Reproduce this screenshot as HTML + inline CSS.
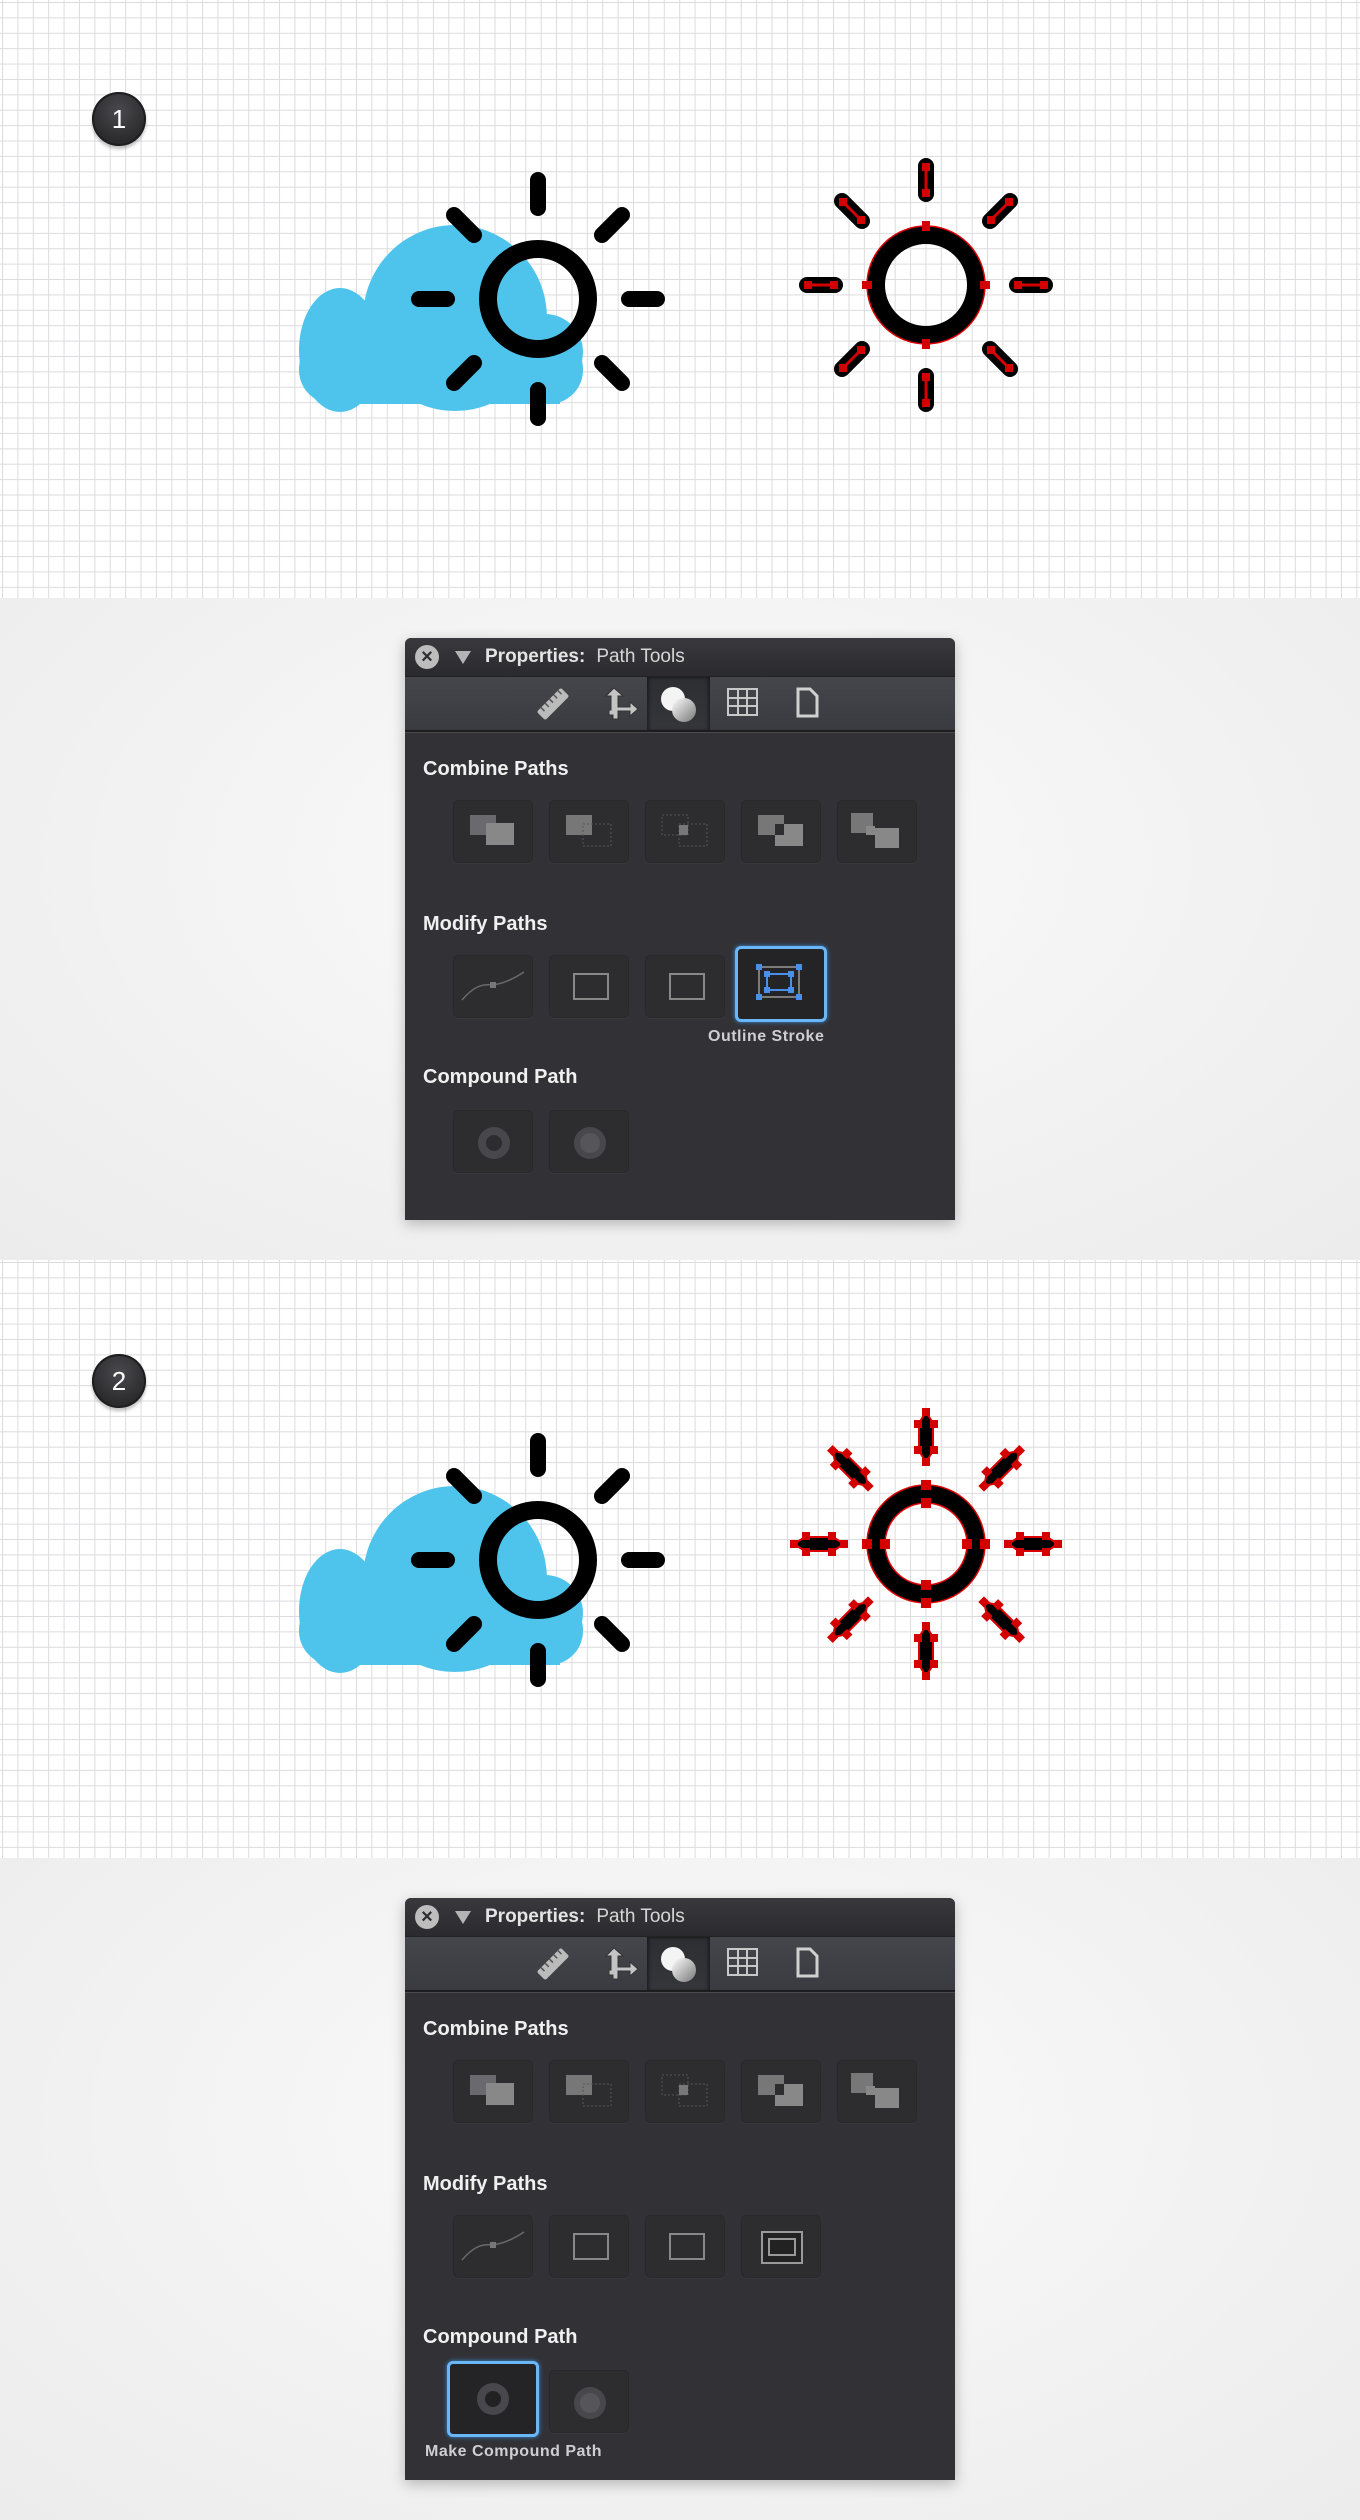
<!DOCTYPE html>
<html><head><meta charset="utf-8">
<style>
*{margin:0;padding:0;box-sizing:border-box}
body{width:1360px;height:2520px;position:relative;overflow:hidden;background:#f1f1f1;font-family:"Liberation Sans",Arial,sans-serif}
.grid{position:absolute;left:0;width:1360px;height:598px;background-color:#fff;
background-image:linear-gradient(#dcdcdf 1px,transparent 1px),linear-gradient(90deg,#dcdcdf 1px,transparent 1px);
background-size:15.4px 15.4px;background-position:2px 2px}
.band{position:absolute;left:0;width:1360px;height:662px;background:radial-gradient(ellipse at 50% 40%,#fbfbfb 0%,#f0f0f0 70%,#ececec 100%)}
.badge{position:absolute;width:54px;height:54px;border-radius:50%;background:radial-gradient(circle at 50% 35%,#4a4a4e,#2a2a2d 70%);box-shadow:0 3px 3px rgba(0,0,0,.25),inset 0 0 0 2px #1e1e20;color:#fff;font-size:26px;text-align:center;line-height:54px;font-family:"Liberation Sans",sans-serif}
.panel{position:absolute;left:405px;width:550px;height:582px;background:#323236;border-radius:6px 6px 0 0;box-shadow:0 4px 14px rgba(0,0,0,.25);overflow:hidden}
.tb{position:absolute;left:0;top:0;width:550px;height:38px;background:linear-gradient(#39393d,#2b2b2f);}
.close{position:absolute;left:10px;top:7px;width:24px;height:24px;border-radius:50%;background:#bdbdbd;color:#2c2c2f;font-size:20px;font-weight:bold;text-align:center;line-height:24px}
.tri{position:absolute;left:50px;top:13px;width:0;height:0;border-left:8px solid transparent;border-right:8px solid transparent;border-top:13px solid #b4b4b4}
.ttl{position:absolute;left:80px;top:8px;font-size:19px;color:#d6d6d6;white-space:nowrap}
.ttl b{color:#e4e4e4;margin-right:11px}
.tools{position:absolute;left:0;top:38px;width:550px;height:54px;background:linear-gradient(#45464b,#3a3b40);border-top:1px solid #222}
.tools .sel{position:absolute;left:242px;top:0;width:63px;height:54px;background:linear-gradient(#2d2e32,#35363a);box-shadow:inset 2px 0 3px rgba(0,0,0,.4),inset -2px 0 3px rgba(0,0,0,.4)}
.line{position:absolute;left:0;top:92px;width:550px;height:3px;background:#1d1d1f;border-bottom:1px solid #4a4a4e}
.h{position:absolute;left:18px;font-size:20px;font-weight:bold;color:#f0f0f0;white-space:nowrap}
.btn{position:absolute;width:80px;height:63px;border-radius:5px;background:#2d2d30;border:1px solid #29292b;box-shadow:0 1px 0 rgba(255,255,255,.03)}
.btn svg{position:absolute;left:0;top:0}
.selb{position:absolute;width:92px;height:76px;border-radius:6px;border:3px solid #6ab6f7;box-shadow:0 0 4px #3b8fe0;background:#242427}
.selb svg{position:absolute;left:3px;top:3px}
.lbl{position:absolute;font-size:16px;font-weight:bold;color:#cfcfd2;white-space:nowrap;letter-spacing:.5px}
</style></head><body>

<div class="grid" style="top:0"></div>
<div class="band" style="top:598px"></div>
<div class="grid" style="top:1260px"></div>
<div class="band" style="top:1858px"></div>

<div class="badge" style="left:92px;top:92px">1</div>
<div class="badge" style="left:92px;top:1354px">2</div>

<svg width="1360" height="2520" style="position:absolute;left:0;top:0">
<defs>
<g id="cloud" fill="#4ec4ed">
<ellipse cx="455" cy="318" rx="92" ry="93"/>
<ellipse cx="340" cy="350" rx="41" ry="62"/>
<circle cx="545" cy="352" r="38"/>
<rect x="299" y="335" width="284" height="69" rx="34"/>
<rect x="340" y="330" width="220" height="74"/>
</g>
<g id="sun" stroke="#000" stroke-linecap="round" fill="none">
<circle r="50" stroke-width="18"/>
<g stroke-width="16">
<line x1="0" y1="-91" x2="0" y2="-119"/>
<line x1="0" y1="91" x2="0" y2="119"/>
<line x1="-91" y1="0" x2="-119" y2="0"/>
<line x1="91" y1="0" x2="119" y2="0"/>
<line x1="-64" y1="-64" x2="-84" y2="-84"/>
<line x1="64" y1="-64" x2="84" y2="-84"/>
<line x1="-64" y1="64" x2="-84" y2="84"/>
<line x1="64" y1="64" x2="84" y2="84"/>
</g></g>
</defs>

<!-- section 1 -->
<use href="#cloud"/>
<use href="#sun" x="538" y="299"/>
<g transform="translate(926,285)">
<use href="#sun"/>
<circle r="59" fill="none" stroke="#d00" stroke-width="1.5"/>
<g fill="#d40000">
<rect x="-4" y="-64" width="8" height="10"/><rect x="-4" y="54" width="8" height="10"/>
<rect x="-64" y="-4" width="10" height="8"/><rect x="54" y="-4" width="10" height="8"/>
</g>
<g stroke="#d40000" stroke-width="3" fill="#d40000">
<line x1="0" y1="-92" x2="0" y2="-118"/><line x1="0" y1="92" x2="0" y2="118"/>
<line x1="-92" y1="0" x2="-118" y2="0"/><line x1="92" y1="0" x2="118" y2="0"/>
<line x1="-65" y1="-65" x2="-83" y2="-83"/><line x1="65" y1="-65" x2="83" y2="-83"/>
<line x1="-65" y1="65" x2="-83" y2="83"/><line x1="65" y1="65" x2="83" y2="83"/>
</g>
<g fill="#d40000">
<rect x="-4" y="-96" width="8" height="8"/><rect x="-4" y="-122" width="8" height="8"/>
<rect x="-4" y="88" width="8" height="8"/><rect x="-4" y="114" width="8" height="8"/>
<rect x="-96" y="-4" width="8" height="8"/><rect x="-122" y="-4" width="8" height="8"/>
<rect x="88" y="-4" width="8" height="8"/><rect x="114" y="-4" width="8" height="8"/>
<rect x="-69" y="-69" width="8" height="8"/><rect x="-87" y="-87" width="8" height="8"/>
<rect x="61" y="-69" width="8" height="8"/><rect x="79" y="-87" width="8" height="8"/>
<rect x="-69" y="61" width="8" height="8"/><rect x="-87" y="79" width="8" height="8"/>
<rect x="61" y="61" width="8" height="8"/><rect x="79" y="79" width="8" height="8"/>
</g></g>

<!-- section 2 -->
<use href="#cloud" y="1261"/>
<use href="#sun" x="538" y="1560"/>
<g transform="translate(926,1544)">
<circle r="50" fill="none" stroke="#000" stroke-width="18"/>
<circle r="59" fill="none" stroke="#d00" stroke-width="1.5"/>
<circle r="41" fill="none" stroke="#d00" stroke-width="1.5"/>
<g id="oray">
<path d="M0,-132 L7,-121 L7,-93 L0,-82 L-7,-93 L-7,-121Z" fill="#000" stroke="#d00" stroke-width="2"/>
<g fill="#d40000"><rect x="-4" y="-136" width="8" height="8"/><rect x="-12" y="-124" width="8" height="8"/><rect x="4" y="-124" width="8" height="8"/><rect x="-12" y="-98" width="8" height="8"/><rect x="4" y="-98" width="8" height="8"/><rect x="-4" y="-86" width="8" height="8"/></g>
</g>
<use href="#oray" transform="rotate(45)"/><use href="#oray" transform="rotate(90)"/><use href="#oray" transform="rotate(135)"/>
<use href="#oray" transform="rotate(180)"/><use href="#oray" transform="rotate(225)"/><use href="#oray" transform="rotate(270)"/><use href="#oray" transform="rotate(315)"/>
<g fill="#d40000">
<rect x="-5" y="-64" width="10" height="10"/><rect x="-5" y="-46" width="10" height="10"/>
<rect x="-5" y="54" width="10" height="10"/><rect x="-5" y="36" width="10" height="10"/>
<rect x="-64" y="-5" width="10" height="10"/><rect x="-46" y="-5" width="10" height="10"/>
<rect x="54" y="-5" width="10" height="10"/><rect x="36" y="-5" width="10" height="10"/>
</g></g>
</svg>

<!-- PANEL 1 -->
<div class="panel" style="top:638px">
<div class="tb"><div class="close">×</div><div class="tri"></div><div class="ttl"><b>Properties:</b>Path Tools</div></div>
<div class="tools"><div class="sel"></div>
<svg width="550" height="54" style="position:absolute;left:0;top:0">
<g transform="translate(148,27) rotate(-45)"><rect x="-17" y="-6" width="34" height="12" rx="2" fill="#bbb"/><g stroke="#555" stroke-width="1.5"><line x1="-11" y1="-6" x2="-11" y2="-1"/><line x1="-5" y1="-6" x2="-5" y2="-1"/><line x1="1" y1="-6" x2="1" y2="-1"/><line x1="7" y1="-6" x2="7" y2="-1"/><line x1="13" y1="-6" x2="13" y2="-1"/></g></g>
<path d="M209,11 l-8,8 h5 v14 h-2 v5 h4 v4 h5 v-8 h12 v5 l8,-7 l-8,-7 v5 h-12 v-11 h5z" fill="#c4c4c4" stroke="#333" stroke-width="1"/>
<circle cx="268" cy="22" r="12" fill="#f4f4f4"/><circle cx="279" cy="33" r="12" fill="url(#gr)"/>
<defs><linearGradient id="gr" x1="0" y1="0" x2="1" y2="1"><stop offset="0" stop-color="#fff"/><stop offset="1" stop-color="#777"/></linearGradient></defs>
<g fill="none" stroke="#c8c8c8" stroke-width="2"><rect x="323" y="12" width="29" height="26"/><line x1="323" y1="21" x2="352" y2="21"/><line x1="323" y1="29" x2="352" y2="29"/><line x1="333" y1="12" x2="333" y2="38"/><line x1="342" y1="12" x2="342" y2="38"/></g>
<path d="M393,12 h12 l7,7 v20 h-19z" fill="none" stroke="#d0d0d0" stroke-width="3"/>
</svg></div>
<div class="line"></div>

<div class="h" style="top:120px">Combine Paths</div>
<div class="btn" style="left:48px;top:162px"><svg width="80" height="63"><rect x="16" y="14" width="26" height="20" fill="#6a6a6e"/><rect x="32" y="22" width="28" height="22" fill="#888"/></svg></div>
<div class="btn" style="left:144px;top:162px"><svg width="80" height="63"><rect x="16" y="14" width="26" height="20" fill="#777"/><rect x="33" y="23" width="28" height="22" fill="none" stroke="#555" stroke-dasharray="2 2"/></svg></div>
<div class="btn" style="left:240px;top:162px"><svg width="80" height="63"><rect x="16" y="14" width="26" height="20" fill="none" stroke="#555" stroke-dasharray="2 2"/><rect x="33" y="23" width="28" height="22" fill="none" stroke="#555" stroke-dasharray="2 2"/><rect x="33" y="24" width="9" height="10" fill="#777"/></svg></div>
<div class="btn" style="left:336px;top:162px"><svg width="80" height="63"><rect x="16" y="14" width="26" height="20" fill="#777"/><rect x="33" y="23" width="28" height="22" fill="#888"/><rect x="33" y="23" width="9" height="11" fill="#2d2d30"/></svg></div>
<div class="btn" style="left:432px;top:162px"><svg width="80" height="63"><rect x="13" y="12" width="22" height="20" fill="#777"/><rect x="37" y="27" width="24" height="20" fill="#888"/><rect x="28" y="25" width="9" height="9" fill="#888"/></svg></div>

<div class="h" style="top:275px">Modify Paths</div>
<div class="btn" style="left:48px;top:317px"><svg width="80" height="63"><path d="M8,44 C20,30 28,28 38,29 C48,28 58,24 70,16" fill="none" stroke="#6a6a6e" stroke-width="1.5"/><rect x="36" y="26" width="6" height="6" fill="#777"/></svg></div>
<div class="btn" style="left:144px;top:317px"><svg width="80" height="63"><rect x="24" y="18" width="34" height="25" fill="none" stroke="#888" stroke-width="2"/></svg></div>
<div class="btn" style="left:240px;top:317px"><svg width="80" height="63"><rect x="24" y="18" width="34" height="25" fill="none" stroke="#888" stroke-width="2"/></svg></div>
<div class="selb" style="left:330px;top:308px"><svg width="80" height="63"><rect x="18" y="15" width="40" height="30" fill="none" stroke="#999" stroke-width="1.5"/><rect x="26" y="22" width="24" height="16" fill="none" stroke="#4a8fe8" stroke-width="2"/><g fill="#4a8fe8"><rect x="15" y="12" width="6" height="6"/><rect x="55" y="12" width="6" height="6"/><rect x="15" y="42" width="6" height="6"/><rect x="55" y="42" width="6" height="6"/><rect x="23" y="19" width="6" height="6"/><rect x="47" y="19" width="6" height="6"/><rect x="23" y="35" width="6" height="6"/><rect x="47" y="35" width="6" height="6"/></g></svg></div>
<div class="lbl" style="left:303px;top:390px">Outline Stroke</div>

<div class="h" style="top:428px">Compound Path</div>
<div class="btn" style="left:48px;top:472px"><svg width="80" height="63"><circle cx="40" cy="32" r="16" fill="#48484c"/><circle cx="40" cy="32" r="8" fill="#2d2d30"/></svg></div>
<div class="btn" style="left:144px;top:472px"><svg width="80" height="63"><circle cx="40" cy="32" r="16" fill="#48484c"/><circle cx="40" cy="32" r="10" fill="#55555a"/></svg></div>
</div>

<!-- PANEL 2 -->
<div class="panel" style="top:1898px">
<div class="tb"><div class="close">×</div><div class="tri"></div><div class="ttl"><b>Properties:</b>Path Tools</div></div>
<div class="tools"><div class="sel"></div>
<svg width="550" height="54" style="position:absolute;left:0;top:0">
<g transform="translate(148,27) rotate(-45)"><rect x="-17" y="-6" width="34" height="12" rx="2" fill="#bbb"/><g stroke="#555" stroke-width="1.5"><line x1="-11" y1="-6" x2="-11" y2="-1"/><line x1="-5" y1="-6" x2="-5" y2="-1"/><line x1="1" y1="-6" x2="1" y2="-1"/><line x1="7" y1="-6" x2="7" y2="-1"/><line x1="13" y1="-6" x2="13" y2="-1"/></g></g>
<path d="M209,11 l-8,8 h5 v14 h-2 v5 h4 v4 h5 v-8 h12 v5 l8,-7 l-8,-7 v5 h-12 v-11 h5z" fill="#c4c4c4" stroke="#333" stroke-width="1"/>
<circle cx="268" cy="22" r="12" fill="#f4f4f4"/><circle cx="279" cy="33" r="12" fill="url(#gr2)"/>
<defs><linearGradient id="gr2" x1="0" y1="0" x2="1" y2="1"><stop offset="0" stop-color="#fff"/><stop offset="1" stop-color="#777"/></linearGradient></defs>
<g fill="none" stroke="#c8c8c8" stroke-width="2"><rect x="323" y="12" width="29" height="26"/><line x1="323" y1="21" x2="352" y2="21"/><line x1="323" y1="29" x2="352" y2="29"/><line x1="333" y1="12" x2="333" y2="38"/><line x1="342" y1="12" x2="342" y2="38"/></g>
<path d="M393,12 h12 l7,7 v20 h-19z" fill="none" stroke="#d0d0d0" stroke-width="3"/>
</svg></div>
<div class="line"></div>

<div class="h" style="top:120px">Combine Paths</div>
<div class="btn" style="left:48px;top:162px"><svg width="80" height="63"><rect x="16" y="14" width="26" height="20" fill="#6a6a6e"/><rect x="32" y="22" width="28" height="22" fill="#888"/></svg></div>
<div class="btn" style="left:144px;top:162px"><svg width="80" height="63"><rect x="16" y="14" width="26" height="20" fill="#777"/><rect x="33" y="23" width="28" height="22" fill="none" stroke="#555" stroke-dasharray="2 2"/></svg></div>
<div class="btn" style="left:240px;top:162px"><svg width="80" height="63"><rect x="16" y="14" width="26" height="20" fill="none" stroke="#555" stroke-dasharray="2 2"/><rect x="33" y="23" width="28" height="22" fill="none" stroke="#555" stroke-dasharray="2 2"/><rect x="33" y="24" width="9" height="10" fill="#777"/></svg></div>
<div class="btn" style="left:336px;top:162px"><svg width="80" height="63"><rect x="16" y="14" width="26" height="20" fill="#777"/><rect x="33" y="23" width="28" height="22" fill="#888"/><rect x="33" y="23" width="9" height="11" fill="#2d2d30"/></svg></div>
<div class="btn" style="left:432px;top:162px"><svg width="80" height="63"><rect x="13" y="12" width="22" height="20" fill="#777"/><rect x="37" y="27" width="24" height="20" fill="#888"/><rect x="28" y="25" width="9" height="9" fill="#888"/></svg></div>

<div class="h" style="top:275px">Modify Paths</div>
<div class="btn" style="left:48px;top:317px"><svg width="80" height="63"><path d="M8,44 C20,30 28,28 38,29 C48,28 58,24 70,16" fill="none" stroke="#6a6a6e" stroke-width="1.5"/><rect x="36" y="26" width="6" height="6" fill="#777"/></svg></div>
<div class="btn" style="left:144px;top:317px"><svg width="80" height="63"><rect x="24" y="18" width="34" height="25" fill="none" stroke="#888" stroke-width="2"/></svg></div>
<div class="btn" style="left:240px;top:317px"><svg width="80" height="63"><rect x="24" y="18" width="34" height="25" fill="none" stroke="#888" stroke-width="2"/></svg></div>
<div class="btn" style="left:336px;top:317px"><svg width="80" height="63"><rect x="20" y="16" width="40" height="31" fill="#222" stroke="#999" stroke-width="2"/><rect x="27" y="23" width="26" height="16" fill="none" stroke="#999" stroke-width="2"/></svg></div>

<div class="h" style="top:428px">Compound Path</div>
<div class="selb" style="left:42px;top:463px"><svg width="80" height="63"><circle cx="40" cy="32" r="16" fill="#48484c"/><circle cx="40" cy="32" r="8" fill="#222"/></svg></div>
<div class="btn" style="left:144px;top:472px"><svg width="80" height="63"><circle cx="40" cy="32" r="16" fill="#48484c"/><circle cx="40" cy="32" r="10" fill="#55555a"/></svg></div>
<div class="lbl" style="left:20px;top:545px">Make Compound Path</div>
</div>

</body></html>
